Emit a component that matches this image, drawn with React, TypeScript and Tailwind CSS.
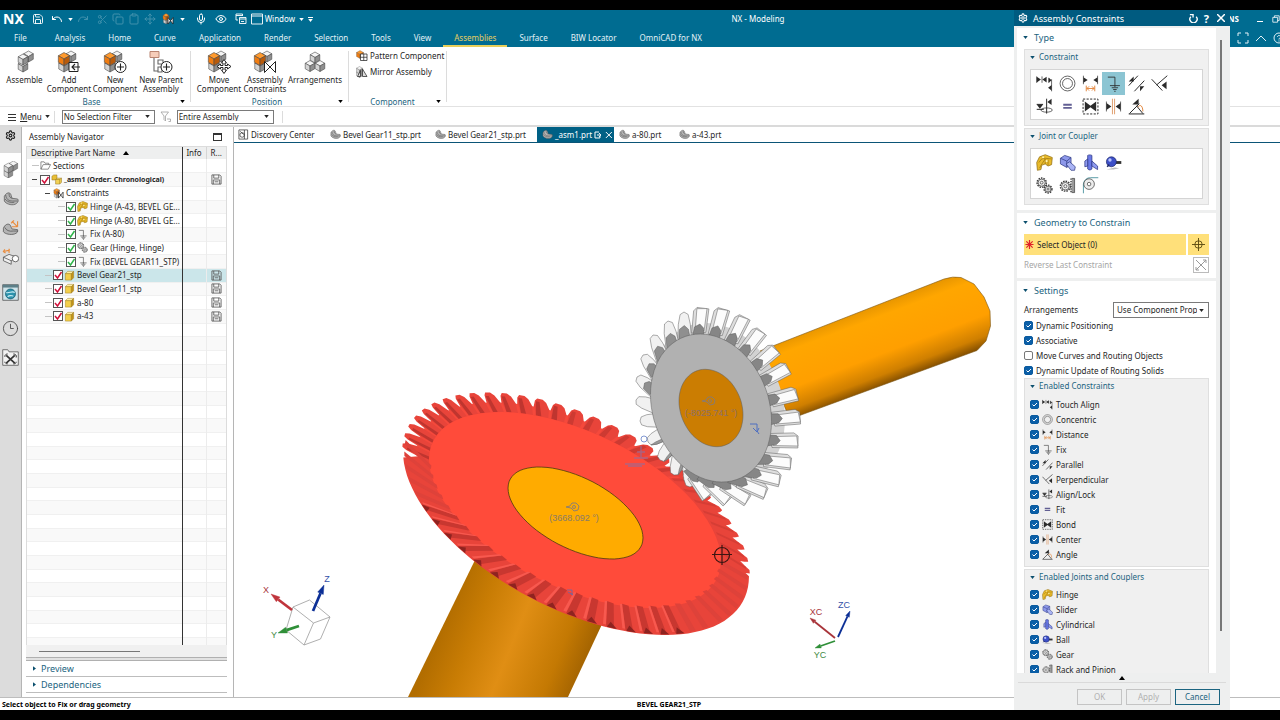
import { useState, type ReactNode } from "react";
import clsx from "clsx";
import {
  Clipboard,
  Clock3,
  Copy,
  Eye,
  Mic,
  Move,
  Redo,
  Save,
  Scissors,
  Settings,
  Undo,
} from "lucide-react";

type Point = [number, number];

/* ---------- small shared pieces ---------- */

function Caret({ className = "" }: { className?: string }) {
  return (
    <svg viewBox="0 0 6 4" className={clsx("h-[3px] w-[5px] shrink-0", className)} fill="currentColor">
      <path d="M0 0h6L3 4z" />
    </svg>
  );
}

function Divider({ className = "" }: { className?: string }) {
  return <span className={clsx("w-px shrink-0 bg-[#dcdcdc]", className)} />;
}

interface DropdownProps {
  label: string;
  options: string[];
  className?: string;
}

function Dropdown({ label, options, className = "" }: DropdownProps) {
  return (
    <span className={clsx("relative flex items-center border border-[#7a7a7a] bg-white", className)}>
      <select
        aria-label={label}
        className="mr-[11px] h-full w-full appearance-none overflow-hidden text-clip whitespace-nowrap bg-transparent pl-px leading-none outline-none"
      >
        {options.map((o) => (
          <option key={o}>{o}</option>
        ))}
      </select>
      <Caret className="pointer-events-none absolute right-1" />
    </span>
  );
}

/* ---------- brick icons ---------- */

function Cube({ x, y, r = 5, orange = false }: { x: number; y: number; r?: number; orange?: boolean }) {
  const w = r * 0.87;
  const h = r / 2;
  const [top, left, right] = orange ? ["#ff9a2e", "#f07c10", "#b85a0a"] : ["#f4f4f4", "#d4d4d4", "#8f8f8f"];
  return (
    <g stroke="#4a4a4a" strokeWidth="0.6" strokeLinejoin="round">
      <path d={`M${x} ${y - r}l${w} ${h}l${-w} ${h}l${-w} ${-h}z`} fill={top} />
      <path d={`M${x - w} ${y - h}l${w} ${h}v${r}l${-w} ${-h}z`} fill={left} />
      <path d={`M${x + w} ${y - h}l${-w} ${h}v${r}l${w} ${-h}z`} fill={right} />
    </g>
  );
}

function Bricks({ orange = false, children }: { orange?: boolean; children?: ReactNode }) {
  return (
    <svg viewBox="0 0 24 24" className="h-6 w-6">
      <Cube x={14} y={6.5} r={5.5} />
      <Cube x={7} y={16} r={6} />
      <Cube x={7} y={9} r={6.5} orange={orange} />
      {children}
    </svg>
  );
}

const line = { fill: "none", stroke: "#222", strokeWidth: 1.1 };

const ribbonIcons: Record<string, ReactNode> = {
  assemble: (
    <svg viewBox="0 0 24 24" className="h-6 w-6">
      <Cube x={15.5} y={6.500} r={5.500} />
      <Cube x={10} y={16.500} r={5.500} />
      <Cube x={10} y={9.500} r={5.500} />
    </svg>
  ),
  add: (
    <Bricks orange>
      <path d="M12 12.500h9v9h-9z" fill="#fff" stroke="#222" />
      <path d="M23 17h-8M18 14l-3 3 3 3" {...line} />
    </Bricks>
  ),
  create: (
    <Bricks orange>
      <circle cx="17.500" cy="17" r="5.500" fill="#fff" stroke="#222" />
      <path d="M17.500 13.500v7M14 17h7" {...line} />
    </Bricks>
  ),
  parent: (
    <svg viewBox="0 0 24 24" className="h-6 w-6">
      <path d="M1 1.500h9v6H1z" fill="#f6cdb9" stroke="#b98470" />
      <path d="M5 8v13h4M9 10h5v4H9zM9 17h4v5H9z" {...line} stroke="#666" />
      <circle cx="17.500" cy="17" r="5.500" fill="#fff" stroke="#222" />
      <path d="M17.500 13.500v7M14 17h7" {...line} />
    </svg>
  ),
  move: (
    <Bricks orange>
      <path d="M17 9.500l2.500 3.500h-1.500v2.500h2.500v-1.500L24 16.500l-3.500 2.500v-1.500H18v2.500h1.500L17 23.500l-2.500-3.500H16v-2.500h-2.500v1.500L10 16.500l3.500-2.500V15.500H16v-2.500h-1.500z" fill="#fff" stroke="#222" />
    </Bricks>
  ),
  constrain: (
    <Bricks orange>
      <path d="M11.500 11.500v11l11-11v11z" fill="#fff" stroke="#222" />
    </Bricks>
  ),
  arrange: (
    <svg viewBox="0 0 24 24" className="h-6 w-6">
      <Cube x={12} y={7.500} r={5.500} />
      <Cube x={7} y={16} r={5.500} />
      <Cube x={17} y={16} r={5.500} />
    </svg>
  ),
};

/* ---------- constraint and joint glyphs ---------- */

const ink = "#2b2b2b";

const glyphs: Record<string, ReactNode> = {
  touch: (
    <>
      <path d="M1 2v9M8.500 2v9M18 4v7M22 6v17" stroke={ink} fill="none" />
      <path d="M1 2.500l6 4-6 4zM15 2.500l-6 4 6 4zM18 4l4 3.500-4 3.500zM22 14l-5 4 5 4z" fill={ink} />
    </>
  ),
  concentric: (
    <g fill="none" stroke={ink}>
      <circle cx="12" cy="12" r="10.500" />
      <circle cx="12" cy="12" r="7" />
    </g>
  ),
  distance: (
    <>
      <path d="M2 1v12M22 1v12" stroke={ink} />
      <path d="M2 3l6 4-6 4zM22 3l-6 4 6 4z" fill={ink} />
      <path d="M6 15v8M18 15v8M7 19h10M10 16l-3 3 3 3M14 16l3 3-3 3" stroke="#e08033" strokeWidth="1.300" fill="none" />
    </>
  ),
  fix: <path d="M4 3h10v14M7 15h14M9.500 18h9M11.500 20.500h5M13 23h2" stroke={ink} strokeWidth="1.200" fill="none" />,
  parallel: (
    <>
      <path d="M1 15L14 1M9 23L23 8" stroke={ink} strokeWidth="1.400" />
      <path d="M1 9l7-7v7zM17 16h6l-6 7z" fill={ink} />
    </>
  ),
  perpendicular: (
    <>
      <path d="M1 6l15 16M8 14L23 1" stroke={ink} strokeWidth="1.400" fill="none" />
      <path d="M22 9v11l-7-5.500z" fill={ink} />
    </>
  ),
  align: (
    <>
      <path d="M1 9h9M1 16h10M15 1v21" stroke={ink} strokeWidth="1.400" />
      <path d="M1 9h9l-4.500 6zM22 1v9l-6-4.500z" fill={ink} />
      <ellipse cx="15" cy="17" rx="8" ry="3" fill="none" stroke={ink} />
    </>
  ),
  fit: <path d="M6 9.500h12M6 14h12" stroke="#625f93" strokeWidth="2.600" />,
  bond: (
    <>
      <path d="M1.500 1.500h21v21h-21z" fill="none" stroke={ink} strokeWidth="1.400" strokeDasharray="3 2" />
      <path d="M4 5v14l8-6v-2zM20 5v14l-8-6v-2z" fill={ink} />
    </>
  ),
  center: (
    <>
      <path d="M2 5v14M22 5v14" stroke={ink} />
      <path d="M2 7l7 5-7 5zM22 7l-7 5 7 5z" fill={ink} />
      <path d="M10.500 1v22M13.500 1v22" stroke="#e0a070" strokeWidth="1.400" />
    </>
  ),
  angle: (
    <>
      <path d="M1 22.500h22M2 22L16 8M12 11l9 11" stroke={ink} strokeWidth="1.400" fill="none" />
      <path d="M6 9l9-8v8z" fill={ink} />
      <path d="M14 13c3-5 7-2 7 6" stroke="#e08033" fill="none" strokeWidth="1.300" />
    </>
  ),
  hinge: (
    <>
      <path d="M1 12L5 4l8-3 10 4-1 10-5 2-4-3-5 2-1 6-5 1z" fill="#e9bb2c" stroke="#8d6a10" />
      <path d="M4 12l4-5 5-1 9 1M7 16l6-9M13 14V7M5 20l2-4M17 8v8" stroke="#9b7410" fill="none" />
      <circle cx="10" cy="4.500" r="1.400" fill="#fff3b0" />
      <circle cx="15" cy="10" r="1.600" fill="#fff3b0" />
    </>
  ),
  slider: (
    <>
      <path d="M2 6l6-4 9 3v9l-6 5-9-5z" fill="#8d98ea" stroke="#2b367f" />
      <path d="M2 6l9 4v9M11 10l6-5" stroke="#2b367f" fill="none" />
      <path d="M10 14l5-3 8 7-1 5h-5z" fill="#aab4f5" stroke="#2b367f" />
    </>
  ),
  cylindrical: (
    <>
      <path d="M8 2c2-1 4-1 6 0v19c-2 2-4 2-6 0z" fill="#6a79e6" stroke="#232e80" />
      <path d="M4 10l4-3v10l-4 1zM14 10l8 7v5l-8-5z" fill="#8f9bf0" stroke="#232e80" />
    </>
  ),
  ball: (
    <>
      <path d="M2 22l12-3 6 1-8 2z" fill="#bbb" />
      <path d="M14 10h9v4h-9z" fill="#333" />
      <circle cx="9" cy="11" r="7" fill="#3d50c8" stroke="#1c2667" />
      <circle cx="7" cy="8.500" r="2.400" fill="#b9c4ff" />
      <path d="M3 18l3-3" stroke="#1c2667" strokeWidth="2" />
    </>
  ),
  gear: (
    <g fill="#f2f2f2" stroke="#3b3b3b">
      <circle cx="8" cy="8" r="6.500" strokeWidth="2" strokeDasharray="2.200 1.400" />
      <circle cx="8" cy="8" r="5" />
      <circle cx="8" cy="8" r="2" />
      <circle cx="17" cy="17" r="5.500" strokeWidth="2" strokeDasharray="2.200 1.400" />
      <circle cx="17" cy="17" r="4" />
      <circle cx="17" cy="17" r="1.500" />
    </g>
  ),
  rack: (
    <g fill="#f2f2f2" stroke="#3b3b3b">
      <circle cx="9" cy="13" r="7" strokeWidth="2" strokeDasharray="2.200 1.400" />
      <circle cx="9" cy="13" r="5.300" />
      <circle cx="9" cy="13" r="2.200" />
      <path d="M18 2h4v20h-4" fill="#999" />
      <path d="M17 2v20" strokeWidth="2" strokeDasharray="2 1.500" />
    </g>
  ),
  cable: (
    <>
      <path d="M2 23V10C3 4 7 1 12 1h11" fill="none" stroke="#3f8c99" strokeWidth="1.200" />
      <circle cx="10" cy="10" r="7.500" fill="#ececec" stroke="#3b3b3b" />
      <circle cx="10" cy="10" r="2.500" fill="#fff" stroke="#3b3b3b" />
    </>
  ),
  block: (
    <g stroke="#9a7613" strokeLinejoin="round">
      <path d="M3 8l5-5h13l-5 5z" fill="#fff0a8" />
      <path d="M3 8h13v14H3z" fill="#f3cf4a" />
      <path d="M16 8l5-5v14l-5 5z" fill="#c29416" />
    </g>
  ),
  assembly: (
    <g stroke="#8c6a10" strokeLinejoin="round">
      <path d="M2 5l4-3h7v8l-4 3H2z" fill="#e8bf36" />
      <path d="M10 12l4-3h9v9l-4 4h-9z" fill="#f2d257" />
      <path d="M10 12h9v10M19 12l4-3" fill="none" />
    </g>
  ),
  constraints: (
    <>
      <Cube x={8} y={16} r={6} />
      <Cube x={8} y={8} r={7} orange />
      <path d="M12 9v13l10-13v13z" fill="#fff" stroke="#222" strokeWidth="1.600" />
    </>
  ),
  folder: <path d="M2 20V4h7l2 3h8v3M2 20L7 10h16l-5 10z" fill="#fff" stroke="#555" strokeWidth="1.400" />,
  disk: (
    <g fill="none" stroke="#555" strokeWidth="1.800">
      <path d="M2 2h17l3 3v17H2z" />
      <path d="M6 2v7h11V2M5 22v-9h14v9M8 17h8" />
    </g>
  ),
  part: (
    <g stroke="#4d4d4d" strokeLinejoin="round">
      <path d="M2 8C4 4 7 2 10 3c3 2 2 6 4 8l8 1c2 3 0 6-4 8-6 2-14-1-16-5z" fill="#b4b4b4" />
      <path d="M4 6c1 6 4 9 10 9h8M3 12c3 4 8 6 14 5M9 4c0 4 2 7 5 7" fill="none" />
    </g>
  ),
};

function Glyph({ name, className = "h-[11px] w-[11px]" }: { name: string; className?: string }) {
  return (
    <svg viewBox="0 0 24 24" className={clsx("shrink-0", className)}>
      {glyphs[name]}
    </svg>
  );
}

/* ---------- title bar and ribbon ---------- */

const menuTabs = [
  "File",
  "Analysis",
  "Home",
  "Curve",
  "Application",
  "Render",
  "Selection",
  "Tools",
  "View",
  "Assemblies",
  "Surface",
  "BIW Locator",
  "OmniCAD for NX",
];

function TitleBar() {
  const dim = "opacity-25";
  return (
    <div className="flex h-[18px] items-center text-white">
      <div className="flex w-[313px] shrink-0 items-center pl-[3px]">
        <span className="w-8 text-[14px] font-bold leading-none">NX</span>
        <button aria-label="Save"><Save size={12} strokeWidth={1.8} /></button>
        <button aria-label="Undo" className="ml-[7px]"><Undo size={12} strokeWidth={2} /></button>
        <Caret className="ml-[5px]" />
        <button aria-label="Redo" className={clsx("ml-1", dim)}><Redo size={12} strokeWidth={2} /></button>
        <button aria-label="Cut" className={clsx("ml-2", dim)}><Scissors size={11} /></button>
        <button aria-label="Copy" className={clsx("ml-1", dim)}><Copy size={12} /></button>
        <button aria-label="Paste" className={clsx("ml-1", dim)}><Clipboard size={12} /></button>
        <button aria-label="Move" className={clsx("ml-1", dim)}><Move size={12} /></button>
        <button aria-label="Assembly Constraints" className="ml-1.5"><Glyph name="constraints" className="h-3 w-3" /></button>
        <Caret className="ml-1.5" />
        <button aria-label="Voice" className="ml-2.5"><Mic size={12} /></button>
        <button aria-label="Look" className="ml-2"><Eye size={12} /></button>
        <button aria-label="Cascade" className="ml-2">
          <svg viewBox="0 0 24 24" className="h-3 w-3" fill="none" stroke="currentColor" strokeWidth="1.800">
            <path d="M6 14H2V2h13v4M2 5h13M9 9h13v12H9zM9 12h13M12 17h6" />
          </svg>
        </button>
        <button className="ml-1 flex items-center gap-0.5">
          <svg viewBox="0 0 24 24" className="h-3 w-3" fill="none" stroke="currentColor" strokeWidth="1.800">
            <path d="M1 2h22v20H1zM1 6h22" />
          </svg>
          Window
          <Caret className="ml-0.5" />
        </button>
        <span className="ml-1 flex flex-col items-center gap-px">
          <span className="h-px w-[5px] bg-white" />
          <Caret />
        </span>
      </div>
      <h1 className="flex-1 text-center">NX - Modeling</h1>
      <div className="flex w-[77px] shrink-0 items-center">
        <span className="w-10 text-right font-bold">NS</span>
        <button aria-label="Minimize" className="ml-[18px] mt-1 h-px w-[6px] shrink-0 bg-white" />
        <button aria-label="Restore" className="ml-[9px] shrink-0">
          <svg viewBox="0 0 10 10" className="h-2 w-2" fill="none" stroke="currentColor">
            <path d="M1 3h6v6H1zM3 3V1h6v6H7" />
          </svg>
        </button>
      </div>
    </div>
  );
}

function MenuTabs() {
  const [active, setActive] = useState("Assemblies");
  return (
    <nav className="flex h-[19px] items-stretch gap-px pl-[3px] text-[#e3f1f6]">
      {menuTabs.map((t) => (
        <button
          key={t}
          onClick={() => setActive(t)}
          className={clsx(
            "whitespace-nowrap border-b-2 px-[11px] pt-0.5",
            t === "File" && "mr-[5px]",
            t === active ? "border-[#e8cf5a] text-[#e6cd62]" : "border-transparent"
          )}
        >
          {t}
        </button>
      ))}
      <span className="ml-auto flex w-[43px] shrink-0 items-center gap-[6px]">
        <svg viewBox="0 0 12 12" className="h-3 w-3 shrink-0" fill="none" stroke="currentColor">
          <path d="M1 4V1h3M8 1h3v3M11 8v3H8M4 11H1V8" />
        </svg>
        <svg viewBox="0 0 12 12" className="h-3 w-3 shrink-0" fill="none" stroke="currentColor">
          <path d="M1 9l5-5 5 5" />
        </svg>
        <svg viewBox="0 0 12 12" className="h-3 w-3 shrink-0" fill="none" stroke="currentColor">
          <circle cx="6" cy="6" r="5" />
          <path d="M4.500 5c0-2 3-2 3 0 0 1-1.500 1-1.500 2.500M6 8.500v1" />
        </svg>
      </span>
    </nav>
  );
}

function RibbonButton({ icon, lines, width = "w-[46px]" }: { icon: string; lines: string[]; width?: string }) {
  return (
    <button className={clsx("flex shrink-0 flex-col items-center pt-[3px]", width)}>
      {ribbonIcons[icon]}
      <span className="mt-px leading-[9px]">
        {lines.map((l) => (
          <span key={l} className="block whitespace-nowrap">{l}</span>
        ))}
      </span>
    </button>
  );
}

function RibbonGroup({ title, className, children }: { title: string; className: string; children: ReactNode }) {
  return (
    <section className={clsx("flex shrink-0 flex-col", className)}>
      <div className="flex flex-1">{children}</div>
      <footer className="flex h-[9px] items-center pr-[5px] text-[#1b6480]">
        <span className="flex-1 text-center leading-none">{title}</span>
        <Caret className="text-black" />
      </footer>
    </section>
  );
}

function Ribbon() {
  return (
    <div className="flex h-[60px] shrink-0 border-b border-[#e2e2e2] bg-white">
      <RibbonGroup title="Base" className="w-[190px] pl-[3px]">
        <RibbonButton icon="assemble" lines={["Assemble"]} width="w-[43px]" />
        <RibbonButton icon="add" lines={["Add", "Component"]} />
        <RibbonButton icon="create" lines={["New", "Component"]} />
        <RibbonButton icon="parent" lines={["New Parent", "Assembly"]} />
      </RibbonGroup>
      <Divider className="my-1" />
      <RibbonGroup title="Position" className="w-[157px] pl-[5px]">
        <RibbonButton icon="move" lines={["Move", "Component"]} />
        <RibbonButton icon="constrain" lines={["Assembly", "Constraints"]} />
        <RibbonButton icon="arrange" lines={["Arrangements"]} width="w-[54px]" />
      </RibbonGroup>
      <Divider className="my-1" />
      <RibbonGroup title="Component" className="w-[97px]">
        <div className="flex flex-col gap-1 pl-[7px] pt-[3px]">
          <button className="flex items-center gap-0.5 whitespace-nowrap leading-none">
            <svg viewBox="0 0 24 24" className="h-3 w-3">
              <Cube x={8} y={9} r={8} orange />
              <path d="M9 8h13v13H9zM9 14.500h13M15.500 8v13" fill="#fff" stroke="#333" strokeWidth="1.600" />
            </svg>
            Pattern Component
          </button>
          <button className="flex items-center gap-0.5 whitespace-nowrap leading-none">
            <svg viewBox="0 0 24 24" className="h-3 w-3">
              <Cube x={7} y={16} r={7} />
              <Cube x={7} y={8} r={7} />
              <path d="M13 21V6l9 15zM9 21V9L3 21z" fill="#ddd" stroke="#333" strokeWidth="1.600" />
            </svg>
            Mirror Assembly
          </button>
        </div>
      </RibbonGroup>
      <Divider className="my-1" />
    </div>
  );
}

function SelectionBar() {
  return (
    <div className="flex h-[18px] shrink-0 items-center bg-white pl-2 pt-px">
      <button className="flex items-center">
        <svg viewBox="0 0 8 8" className="mr-1 h-2 w-2" stroke="#333" strokeWidth="1">
          <path d="M0 1.500h8M0 4.500h8M0 7.500h8" />
        </svg>
        <span><u>M</u>enu</span>
        <Caret className="ml-[3px]" />
      </button>
      <Divider className="ml-1 h-3" />
      <Dropdown label="Selection filter" className="ml-[7px] h-3.5 w-[93px]" options={["No Selection Filter", "Component", "Face"]} />
      <svg viewBox="0 0 24 24" className="mx-[5px] h-3 w-3" fill="none" stroke="#999" strokeWidth="1.500">
        <path d="M2 2h15l-6 8v10l-3-3v-7zM14 16h7v5h-4" />
      </svg>
      <Dropdown label="Selection scope" className="h-3.5 w-[97px]" options={["Entire Assembly", "Work Part Only"]} />
      <Divider className="ml-2 h-3" />
    </div>
  );
}

/* ---------- resource rail and navigator ---------- */

function ResourceRail() {
  return (
    <aside className="flex w-[22px] shrink-0 flex-col items-center border-r border-[#b5b5b5] bg-[#dcdcdc]">
      <button aria-label="Settings" className="flex h-[26px] items-start pt-[3px]">
        <Settings size={11} strokeWidth={2.5} color="#222" />
      </button>
      <button aria-label="Assembly Navigator" className="flex h-8 w-[21px] items-center justify-center self-start bg-white">
        <svg viewBox="0 0 24 24" className="h-[17px] w-[17px]">
          <Cube x={16} y={7} r={7} />
          <Cube x={9} y={17} r={7} />
          <Cube x={9} y={10} r={7} />
        </svg>
      </button>
      <button aria-label="Part Navigator" className="flex h-[28px] items-center">
        <Glyph name="part" className="h-4 w-4" />
      </button>
      <button aria-label="Reuse Library" className="flex h-[29px] items-center">
        <svg viewBox="0 0 24 24" className="h-[17px] w-[17px]">
          <path d="M2 13c2-5 6-7 9-5 2 2 2 5 3 6l8 1c1 3-1 5-4 6-6 2-14 0-16-3z" fill="#b4b4b4" stroke="#4d4d4d" />
          <path d="M4 12c2 4 6 6 12 5h6" fill="none" stroke="#4d4d4d" />
          <path d="M14 3l8 8M22 3v8M14 11h8M13 6l4-4" stroke="#e98b3c" fill="none" strokeWidth="1.600" />
        </svg>
      </button>
      <button aria-label="View Manager" className="flex h-[29px] items-center">
        <svg viewBox="0 0 24 24" className="h-[17px] w-[17px]">
          <path d="M2 13l8-4 11 4-8 5zM2 13v5l11 5v-5" fill="#eee" stroke="#444" />
          <path d="M2 5l9-2M4 2L2 5l3 2M10 1v6" stroke="#e98b3c" strokeWidth="1.600" fill="none" />
          <circle cx="19" cy="15" r="4.500" fill="#fff" stroke="#333" />
        </svg>
      </button>
      <button aria-label="Web Browser" className="flex h-[43px] items-center">
        <svg viewBox="0 0 24 24" className="h-[17px] w-[17px]">
          <path d="M1 1h22v22H1z" fill="#cfe4ea" stroke="#444" />
          <path d="M1 1h22v4H1z" fill="#5d7f88" />
          <circle cx="12" cy="14" r="7" fill="#2c93ad" stroke="#10566a" />
          <path d="M6 12c4 2 8-3 12 0M8 18c3-3 6-1 8-1" stroke="#c8eef5" fill="none" strokeWidth="1.500" />
        </svg>
      </button>
      <button aria-label="History" className="flex h-[29px] items-center">
        <Clock3 size={17} strokeWidth={1.2} color="#444" />
      </button>
      <button aria-label="Roles" className="flex h-[29px] items-center">
        <svg viewBox="0 0 24 24" className="h-[17px] w-[17px]">
          <path d="M1 1h7l2 3h13v19H1z" fill="#f3f3f3" stroke="#444" />
          <path d="M6 9l12 11M18 9L6 20" stroke="#333" strokeWidth="2.400" fill="none" />
          <path d="M4 11c0-3 2-4 4-4M16 7c3 0 5 2 4 5M4 18c0 2 2 3 4 3M16 21c3 0 4-1 4-3" stroke="#333" strokeWidth="1.400" fill="none" />
        </svg>
      </button>
    </aside>
  );
}

interface TreeRow {
  name: string;
  icon: string;
  depth: number;
  check?: "red" | "green";
  open?: boolean;
  saved?: boolean;
  bold?: boolean;
}

const treeRows: TreeRow[] = [
  { name: "Sections", icon: "folder", depth: 0 },
  { name: "_asm1 (Order: Chronological)", icon: "assembly", depth: 0, check: "red", open: true, saved: true, bold: true },
  { name: "Constraints", icon: "constraints", depth: 1, open: true },
  { name: "Hinge (A-43, BEVEL GE...", icon: "hinge", depth: 2, check: "green" },
  { name: "Hinge (A-80, BEVEL GE...", icon: "hinge", depth: 2, check: "green" },
  { name: "Fix (A-80)", icon: "fix", depth: 2, check: "green" },
  { name: "Gear (Hinge, Hinge)", icon: "gear", depth: 2, check: "green" },
  { name: "Fix (BEVEL GEAR11_STP)", icon: "fix", depth: 2, check: "green" },
  { name: "Bevel Gear21_stp", icon: "block", depth: 1, check: "red", saved: true },
  { name: "Bevel Gear11_stp", icon: "block", depth: 1, check: "red", saved: true },
  { name: "a-80", icon: "block", depth: 1, check: "red", saved: true },
  { name: "a-43", icon: "block", depth: 1, check: "red", saved: true },
];

const indents = ["w-[13px]", "w-[26px]", "w-[39px]"];

function TreeCheck({ name, color }: { name: string; color: "red" | "green" }) {
  return (
    <span className="relative h-[10px] w-[10px] shrink-0">
      <input
        type="checkbox"
        defaultChecked
        aria-label={name}
        className="peer absolute inset-0 h-full w-full appearance-none border border-[#555] bg-white"
      />
      <svg
        viewBox="0 0 10 10"
        className={clsx(
          "pointer-events-none absolute inset-0 hidden peer-checked:block",
          color === "red" ? "text-[#d0103a]" : "text-[#2fb54a]"
        )}
        fill="none"
        stroke="currentColor"
        strokeWidth="1.500"
      >
        <path d="M2 5l2.500 3L8.500 2" />
      </svg>
    </span>
  );
}

function TreeName({ row }: { row: TreeRow }) {
  return (
    <span className="flex h-3 items-center whitespace-nowrap leading-none">
      <span className={clsx("flex shrink-0 items-center pl-[5px]", indents[row.depth])}>
        {row.depth === 2 ? (
          <span className="ml-[26px] h-px w-[7px] bg-[#c4c4c4]" />
        ) : row.open ? (
          <span className={clsx("h-px w-[5px] bg-[#444]", row.depth === 1 && "ml-[13px]")} />
        ) : (
          <span className={clsx("h-px w-[7px] bg-[#c4c4c4]", row.depth === 1 && "ml-[13px]")} />
        )}
      </span>
      {row.check && <TreeCheck name={row.name} color={row.check} />}
      <Glyph name={row.icon} className={clsx("h-[11px] w-[11px]", row.check && "ml-px")} />
      <span className={clsx("ml-[2px]", row.bold && "text-[7px] font-bold")}>{row.name}</span>
    </span>
  );
}

function AssemblyNavigator() {
  const [selected, setSelected] = useState("Bevel Gear21_stp");
  const empty = Array.from({ length: 23 }, (_, i) => i);
  const infoCell = "border-l border-[#333] p-0";
  const lastCell = "border-l border-[#ececec] p-0";
  return (
    <section className="flex w-[212px] shrink-0 flex-col border-r border-[#b5b5b5] bg-white pl-1 pr-[6px]">
      <header className="flex h-[19px] items-center justify-between pl-[3px] pr-[5px]">
        <h2>Assembly Navigator</h2>
        <button aria-label="Undock" className="h-2 w-[9px] border border-t-2 border-[#333]" />
      </header>
      <div className="flex-1 border-x border-t border-[#dcdcdc]">
        <table className="h-full w-full table-fixed border-collapse">
          <thead>
            <tr className="h-3 bg-[#eeefef] text-left">
              <th className="p-0 pl-1 font-normal leading-none">
                <span className="flex items-center">
                  Descriptive Part Name
                  <svg viewBox="0 0 6 4" className="ml-2 h-1 w-[6px]"><path d="M3 0l3 4H0z" /></svg>
                </span>
              </th>
              <th className="w-6 border-l border-[#333] p-0 text-center font-normal leading-none">Info</th>
              <th className="w-5 border-l border-[#d5d5d5] p-0 text-center font-normal leading-none">R...</th>
            </tr>
          </thead>
          <tbody>
            {treeRows.map((row) => (
              <tr
                key={row.name}
                onClick={() => setSelected(row.name)}
                className={clsx("h-[13px] border-b border-[#f0f0f0]", row.name === selected ? "bg-[#cbe6ea]" : "odd:bg-white even:bg-[#f9f9f9]")}
              >
                <td className="overflow-hidden p-0"><TreeName row={row} /></td>
                <td className={infoCell} />
                <td className={lastCell}>
                  {row.saved && <Glyph name="disk" className="mx-auto block h-[11px] w-[11px]" />}
                </td>
              </tr>
            ))}
            {empty.map((i) => (
              <tr key={i} className="h-[13px] border-b border-[#f0f0f0] even:bg-[#f9f9f9]">
                <td className="p-0" />
                <td className={infoCell} />
                <td className={lastCell} />
              </tr>
            ))}
            <tr className="h-[7px] bg-[#f9f9f9]">
              <td className="p-0" />
              <td className={infoCell} />
              <td className={lastCell} />
            </tr>
          </tbody>
        </table>
      </div>
      <div className="flex h-3 items-center bg-[#f0f0f0] pl-[13px]">
        <span className="h-px w-[101px] bg-[#777]" />
      </div>
      <div className="h-1 border-y border-[#b0b0b0] bg-[#e2e2e2]" />
      {["Preview", "Dependencies"].map((t) => (
        <button key={t} className="flex h-4 items-center border-b border-[#bdbdbd] pl-[7px] text-[9px] leading-none text-[#1b6480]">
          <svg viewBox="0 0 4 6" className="mr-[5px] h-[5px] w-[3px]" fill="#0b4f6e"><path d="M0 0l4 3-4 3z" /></svg>
          {t}
        </button>
      ))}
      <div className="h-1" />
    </section>
  );
}

/* ---------- document tabs ---------- */

const docTabs = [
  { name: "Bevel Gear11_stp.prt", width: "w-[105px]" },
  { name: "Bevel Gear21_stp.prt", width: "w-[107px]" },
  { name: "_asm1.prt", width: "w-[77px]", active: true },
  { name: "a-80.prt", width: "w-[60px]" },
  { name: "a-43.prt", width: "w-[60px]" },
];

function DocumentTabs() {
  return (
    <div className="flex h-4 shrink-0 border-b border-[#0b5577] bg-white">
      <button className="flex w-[91px] shrink-0 items-center gap-0.5 whitespace-nowrap pl-1">
        <svg viewBox="0 0 24 24" className="h-[11px] w-[11px]" fill="none" stroke="#333" strokeWidth="1.600">
          <path d="M2 2h12v20H2zM14 2h7v20h-7" />
          <circle cx="9" cy="13" r="5" />
          <path d="M5 5l7 7" />
        </svg>
        Discovery Center
      </button>
      {docTabs.map((t) => (
        <button
          key={t.name}
          className={clsx("flex shrink-0 items-center gap-0.5 whitespace-nowrap pl-[5px]", t.width, t.active && "bg-[#006085] text-white")}
        >
          <Glyph name="part" />
          {t.name}
          {t.active && (
            <svg viewBox="0 0 20 8" className="h-2 w-5" fill="none" stroke="currentColor">
              <path d="M5 1H1v6h5V5M3 4h3M5 2l2 2-2 2M12 1l6 6M18 1l-6 6" />
            </svg>
          )}
        </button>
      ))}
    </div>
  );
}

/* ---------- 3D view ---------- */

// Projected circle: half extents plus the phase between the two axes.
interface Ring {
  cx: number;
  cy: number;
  rx: number;
  ry: number;
  phase: number;
}

const redOuter: Ring = { cx: 576, cy: 514, rx: 173, ry: 121, phase: 1.03 };
const redFace: Ring = { cx: 575, cy: 510, rx: 146, ry: 98, phase: 1.03 };
const redHub: Ring = { cx: 575.5, cy: 513, rx: 67.5, ry: 46, phase: 1.0 };
const grayBack: Ring = { cx: 718, cy: 404, rx: 67, ry: 81, phase: 1.39 };
const grayFace: Ring = { cx: 711, cy: 408, rx: 60.5, ry: 74, phase: 1.39 };
const grayHub: Ring = { cx: 711, cy: 408, rx: 32, ry: 38.7, phase: 1.39 };

function at(r: Ring, t: number): Point {
  return [r.cx + r.rx * Math.cos(t), r.cy + r.ry * Math.cos(t - r.phase)];
}

function mix(a: Point, b: Point, k: number): Point {
  return [a[0] + (b[0] - a[0]) * k, a[1] + (b[1] - a[1]) * k];
}

function pts(list: Point[]) {
  return list.map(([x, y]) => `${x.toFixed(1)},${y.toFixed(1)}`).join(" ");
}

function ringPoints(r: Ring) {
  return pts(Array.from({ length: 72 }, (_, i) => at(r, (i * Math.PI) / 36)));
}

// Point between the flat face (k = 0) and the outer rim (k = 1) of the red gear.
function band(t: number, k: number) {
  return mix(at(redFace, t), at(redOuter, t), k);
}

const redCount = 58;
const redStep = (Math.PI * 2) / redCount;

function RedToothTop({ t }: { t: number }) {
  const s = redStep;
  if (t > 5.4) {
    return <polygon points={pts([band(t, 0.1), band(t + s * 0.3, 0.9), band(t + s * 0.5, 0.9), band(t + s * 0.25, 0.1)])} fill="#d63d35" />;
  }
  return (
    <g>
      <polygon
        points={pts([band(t, 0), band(t + s * 0.3, 0.85), band(t + s * 0.5, 0.85), band(t + s * 0.35, 0)])}
        fill={t < 4.6 ? "#bf352f" : "#cd3a32"}
      />
      <polygon points={pts([band(t + s * 0.8, 0), band(t + s * 0.95, 0.5), band(t + s * 1.1, 0.5), band(t + s, 0)])} fill="#f5493c" />
    </g>
  );
}

function RedToothBottom({ t }: { t: number }) {
  const s = redStep;
  // ridges sweep further round the rim on the left
  const lean = t < 0.6 ? 0 : 0.04 + Math.max(0, t - 1.2) * 0.08;
  const soft = t < 0.8 || t > 2.5;
  return (
    <g>
      <polygon
        points={pts([band(t, -0.04), band(t + s * 0.42, -0.08), band(t + s * 0.42 + lean, 0.95), band(t + lean, 0.95)])}
        fill={soft ? "#de423a" : "#c83730"}
      />
      {!soft && (
        <>
          <polygon points={pts([band(t + s * 0.42, -0.08), band(t + s * 0.58, -0.06), band(t + s * 0.58 + lean, 0.9), band(t + s * 0.42 + lean, 0.9)])} fill="#f8594f" />
          <polygon points={pts([band(t + lean - s * 0.15, 0.98), band(t + lean + s * 0.1, 0.74), band(t + lean + s * 0.4, 0.98)])} fill="#8e2320" />
        </>
      )}
    </g>
  );
}

function RedGear() {
  const teeth = Array.from({ length: redCount }, (_, i) => i * redStep);
  const outline = teeth.flatMap((t): Point[] => {
    if (t <= 3.1) return [band(t, 1), band(t + redStep / 2, 1)];
    const root = t > 5.4 ? 0.72 : 0.42;
    return [
      band(t, root),
      band(t + redStep * 0.25, 0.88),
      band(t + redStep * 0.42, 1.03),
      band(t + redStep * 0.72, 1.03),
      band(t + redStep * 0.88, 0.88),
    ];
  });
  return (
    <g>
      <polygon points={pts(outline)} fill="#e8443a" />
      {teeth.filter((t) => t > 3.1).map((t) => <RedToothTop key={t} t={t} />)}
      <polygon points={ringPoints(redFace)} fill="#ff4b3a" />
      {teeth.filter((t) => t <= 3.1).map((t) => <RedToothBottom key={t} t={t} />)}
      <polygon points={ringPoints(redHub)} fill="#ffab00" stroke="#4a3a10" strokeWidth="0.8" />
    </g>
  );
}

const grayTips: Point[] = [
  [702, 308], [684, 312], [668, 321], [653, 335], [643, 355], [637, 377], [636, 400],
  [640, 421], [648, 442], [660, 460], [674, 475], [690, 487], [708, 497], [728, 501],
  [748, 500], [766, 493], [780, 480], [791, 463], [798, 441], [800, 417], [797, 394],
  [788, 368], [776, 349], [761, 331], [744, 317], [723, 309],
];

function GrayTooth({ tip }: { tip: Point }) {
  const angle = Math.atan2(tip[1] - 404, tip[0] - 718);
  const turned = Math.cos(angle) > -0.2 && angle > 0 ? angle + 0.18 * Math.sin(angle) : angle;
  const ux = Math.cos(turned);
  const uy = Math.sin(turned);
  // distance from the face centre to its edge in this direction
  const reach = 1 / Math.sqrt(2.826e-4 * ux * ux - 8.4e-5 * ux * uy + 1.889e-4 * uy * uy);
  const base: Point = [711 + ux * reach, 408 + uy * reach];
  const len = Math.hypot(tip[0] - base[0], tip[1] - base[1]);
  const vx = (tip[0] - base[0]) / len;
  const vy = (tip[1] - base[1]) / len;
  const side = (k: number, offset: number): Point => {
    const p = mix(base, tip, k);
    return [p[0] - vy * offset, p[1] + vx * offset];
  };

  if (Math.cos(angle) < -0.25) {
    return (
      <g>
        <polygon points={pts([side(-0.3, -7), side(0.5, -6), side(0.9, -4), side(1, 0), side(0.9, 4), side(0.5, 6), side(-0.3, 7)])} fill="#f1f1f1" />
        {vy < -0.5 && <polygon points={pts([side(-0.2, -6), side(0.3, -5), side(0.45, 0), side(0.3, 4), side(-0.2, 6)])} fill="#8f8f8f" />}
        {vy > 0.15 && <polygon points={pts([side(-0.2, -7), side(0.5, -6), side(0.9, -4), side(0.5, -3.5), side(-0.2, -4)])} fill="#999" />}
      </g>
    );
  }
  return (
    <g>
      <polygon points={pts([side(0, -7), side(0.85, -8), side(1, -5), side(1, 7), side(0.1, 7)])} fill="#dedede" />
      <polygon points={pts([side(0.2, -4), side(0.95, -5), side(1, 5), side(0.15, 5)])} fill="#fcfcfc" />
      <polygon points={pts([side(-0.2, -6), side(0.25, -5), side(0.38, 0), side(0.25, 4), side(-0.2, 6)])} fill="#868686" />
    </g>
  );
}

function GrayGear() {
  return (
    <g stroke="#5a5a5a" strokeWidth="0.5" strokeLinejoin="round">
      <polygon points={ringPoints(grayBack)} fill="#d2d2d2" stroke="none" />
      {grayTips.map((tip) => (
        <GrayTooth key={tip.join()} tip={tip} />
      ))}
      <polygon points={ringPoints(grayFace)} fill="#b1b1b1" />
      <polygon points={ringPoints(grayHub)} fill="#cb7d02" />
    </g>
  );
}

function Arrow({ from, to, color, size = 3 }: { from: Point; to: Point; color: string; size?: number }) {
  const len = Math.hypot(to[0] - from[0], to[1] - from[1]);
  const ux = (to[0] - from[0]) / len;
  const uy = (to[1] - from[1]) / len;
  const neck: Point = [to[0] - ux * size * 3, to[1] - uy * size * 3];
  return (
    <g fill={color} stroke={color}>
      <path d={`M${from[0]} ${from[1]}L${neck[0]} ${neck[1]}`} strokeWidth={size * 0.9} />
      <polygon points={pts([to, [neck[0] - uy * size, neck[1] + ux * size], [neck[0] + uy * size, neck[1] - ux * size]])} strokeWidth="0.4" />
    </g>
  );
}

function HingeMark({ x, y }: { x: number; y: number }) {
  return (
    <g fill="none" stroke="#857a78" strokeWidth="0.9">
      <path d={`M${x - 7} ${y}l4-1 2-3h4l3 3-1 4-4 1-3-3z`} />
      <circle cx={x + 1} cy={y} r="1.500" />
    </g>
  );
}

function GraphicsView() {
  return (
    <svg
      viewBox="234 143 1046 554"
      preserveAspectRatio="xMinYMin meet"
      className="min-h-0 w-full flex-1 bg-white"
      role="img"
      aria-label="Bevel gear assembly"
    >
      <defs>
        <linearGradient id="shaftA" gradientUnits="userSpaceOnUse" x1="858" y1="312" x2="886" y2="386">
          <stop offset="0" stopColor="#e89600" />
          <stop offset="0.15" stopColor="#ffa600" />
          <stop offset="0.6" stopColor="#ff9f00" />
          <stop offset="0.85" stopColor="#cf7f00" />
          <stop offset="1" stopColor="#7c4a00" />
        </linearGradient>
        <linearGradient id="shaftB" gradientUnits="userSpaceOnUse" x1="436" y1="640" x2="584" y2="700">
          <stop offset="0" stopColor="#b26d00" />
          <stop offset="0.2" stopColor="#c87c04" />
          <stop offset="0.45" stopColor="#e08e14" />
          <stop offset="0.75" stopColor="#c47903" />
          <stop offset="1" stopColor="#955a00" />
        </linearGradient>
      </defs>

      <path d="M760 351L944 279Q953 276 961 277.500L974 284 984 297 990 311 990.500 326 986 341 977 350.500 790 419z" fill="url(#shaftA)" stroke="#7a5413" strokeWidth="0.6" />
      <path d="M475 560L408 697H568L604 620z" fill="url(#shaftB)" />
      <RedGear />
      <GrayGear />

      <HingeMark x={573} y={507} />
      <HingeMark x={709} y={401} />
      <g fontFamily="Liberation Sans, Arial, sans-serif" fontSize="9" textAnchor="middle">
        <text x="574" y="521" fill="#8a7c66">(3668.092 °)</text>
        <text x="711" y="416" fill="#8c7068">(-8025.741 °)</text>
      </g>
      <g fill="none" stroke="#4f6fc0">
        <path d="M750 424h7v8M753 428l4 4 2-4M757 431l2 3" />
        <path d="M567 590h5v5M568 592l5 3" opacity="0.7" />
        <path d="M637 452h8M641 446v12M634 458h14M625 464h20M628 466h14" stroke="#8f6f9f" strokeWidth="1.400" opacity="0.7" />
        <circle cx="644" cy="439" r="3" opacity="0.7" />
      </g>

      <g fill="none" stroke="#3c1512">
        <circle cx="722" cy="555" r="7.500" strokeWidth="1.200" />
        <path d="M712 554.500h20M722 545v20" strokeWidth="1.200" />
      </g>

      <g fill="none" stroke="#9a9a9a" strokeWidth="0.8">
        <path d="M293 607L309.500 600L330 617L313.500 623zM313.500 623L304 645L320.500 639L330 617M293 607L286 630L304 645" />
      </g>
      <Arrow from={[292, 610]} to={[271, 594]} color="#c0353c" />
      <Arrow from={[313, 611]} to={[324, 585]} color="#0c2f96" />
      <Arrow from={[299, 626]} to={[278, 633]} color="#2f8f38" />
      <Arrow from={[835, 638]} to={[810, 618]} color="#a8343a" size={2} />
      <Arrow from={[838, 637]} to={[850, 611]} color="#0c2f96" size={2} />
      <Arrow from={[835, 641]} to={[815, 648]} color="#2f8f38" size={2} />
      <g fontFamily="Liberation Sans, Arial, sans-serif" fontSize="9" textAnchor="middle">
        <text x="266" y="593" fill="#a8343a">X</text>
        <text x="327" y="582" fill="#3450a8">Z</text>
        <text x="274" y="638" fill="#3f8a44">Y</text>
        <text x="816" y="615" fill="#a8343a">XC</text>
        <text x="844" y="608" fill="#3450a8">ZC</text>
        <text x="820" y="658" fill="#3f8a44">YC</text>
      </g>
    </svg>
  );
}

/* ---------- Assembly Constraints dialog ---------- */

const constraintKinds = [
  ["touch", "Touch Align"],
  ["concentric", "Concentric"],
  ["distance", "Distance"],
  ["fix", "Fix"],
  ["parallel", "Parallel"],
  ["perpendicular", "Perpendicular"],
  ["align", "Align/Lock"],
  ["fit", "Fit"],
  ["bond", "Bond"],
  ["center", "Center"],
  ["angle", "Angle"],
];

const jointKinds = [
  ["hinge", "Hinge"],
  ["slider", "Slider"],
  ["cylindrical", "Cylindrical"],
  ["ball", "Ball"],
  ["gear", "Gear"],
  ["rack", "Rack and Pinion"],
];

function SectionTitle({ children }: { children: ReactNode }) {
  return (
    <h3 className="flex h-[19px] items-center pl-[6px] text-[9px] leading-none text-[#1b6480]">
      <Caret className="mr-[6px] text-[#0b4f6e]" />
      {children}
    </h3>
  );
}

function SubPanel({ title, children }: { title: string; children: ReactNode }) {
  return (
    <div className="border border-[#dfdfdf] bg-[#f0f0f0] px-[5px]">
      <h4 className="flex h-[15px] items-center pb-px leading-none text-[#1b6480]">
        <Caret className="mr-[4px] text-[#0b4f6e]" />
        {title}
      </h4>
      {children}
    </div>
  );
}

interface PaletteProps {
  kinds: string[][];
  perRow: number;
  value: string;
  onPick: (id: string) => void;
}

function Palette({ kinds, perRow, value, onPick }: PaletteProps) {
  const rows = [kinds.slice(0, perRow), kinds.slice(perRow)];
  return (
    <div className="mb-[5px] mt-1 h-[51px] border border-[#d4d4d4] bg-white pl-0.5 pt-0.5">
      {rows.map((row, i) => (
        <div key={i} className="flex">
          {row.map(([id, label]) => (
            <button
              key={id}
              aria-label={label}
              onClick={() => onPick(id)}
              className={clsx("flex h-[23px] w-[23px] items-center justify-center", value === id && "bg-[#8cc5d3]")}
            >
              <Glyph name={id} className="h-[17px] w-[17px]" />
            </button>
          ))}
        </div>
      ))}
    </div>
  );
}

function Check({ label, icon, checked = true }: { label: string; icon?: string; checked?: boolean }) {
  return (
    <label className="flex h-[15px] items-center whitespace-nowrap leading-none">
      <span className="relative h-[9px] w-[9px] shrink-0">
        <input
          type="checkbox"
          defaultChecked={checked}
          className="peer absolute inset-0 h-full w-full appearance-none rounded-[2px] border border-[#777] bg-white checked:border-[#0a5a9e] checked:bg-[#0b5fa8]"
        />
        <svg viewBox="0 0 9 9" className="pointer-events-none absolute inset-0 hidden peer-checked:block" fill="none" stroke="#fff">
          <path d="M2.500 4.500L4 6l3-3" />
        </svg>
      </span>
      {icon && <Glyph name={icon} className="ml-[3px] h-[11px] w-[11px]" />}
      <span className="ml-[3px]">{label}</span>
    </label>
  );
}

function ConstraintsDialog() {
  const [kind, setKind] = useState("fix");
  const button = "h-4 w-[45px] border text-center leading-none";
  return (
    <div
      role="dialog"
      aria-label="Assembly Constraints"
      className="absolute inset-y-0 right-[50px] flex w-[216px] flex-col bg-[#eeefef]"
    >
      <header className="flex h-4 shrink-0 items-center bg-[#005b80] pl-1 pr-[5px] text-[9px] leading-none text-white">
        <Settings size={10} strokeWidth={2.5} />
        <h2 className="ml-[5px] flex-1">Assembly Constraints</h2>
        <button aria-label="Reset">
          <svg viewBox="0 0 10 10" className="h-[9px] w-[9px]" fill="none" stroke="currentColor" strokeWidth="1.500">
            <path d="M2 3a4 4 0 1 0 6 0M1 .5h3.500V4" />
          </svg>
        </button>
        <button className="ml-[6px] text-[11px] font-bold" aria-label="Help">?</button>
        <button className="ml-[8px]" aria-label="Close">
          <svg viewBox="0 0 8 8" className="h-2 w-2" stroke="currentColor" strokeWidth="1.500"><path d="M0 0l8 8M8 0L0 8" /></svg>
        </button>
      </header>

      <div className="flex min-h-0 flex-1 pl-[3px] pt-0.5">
        <div className="flex w-[199px] shrink-0 flex-col gap-[3px] overflow-hidden">
          <section className="bg-white pb-[5px]">
            <SectionTitle>Type</SectionTitle>
            <div className="flex flex-col gap-0.5 px-[7px] pt-0.5">
              <SubPanel title="Constraint">
                <Palette kinds={constraintKinds} perRow={6} value={kind} onPick={setKind} />
              </SubPanel>
              <SubPanel title="Joint or Coupler">
                <Palette kinds={[...jointKinds, ["cable", "Cable"]]} perRow={4} value={kind} onPick={setKind} />
              </SubPanel>
            </div>
          </section>

          <section className="bg-white pb-[5px]">
            <SectionTitle>Geometry to Constrain</SectionTitle>
            <div className="flex flex-col gap-0.5 px-[7px] pt-0.5">
              <div className="flex h-[21px] gap-0.5">
                <button className="flex flex-1 items-center bg-[#ffe07a] pl-px">
                  <svg viewBox="0 0 10 10" className="mr-[3px] h-[9px] w-[9px]" stroke="#e0202a" strokeWidth="1.300">
                    <path d="M5 0v10M.5 5h9M1.500 1.500l7 7M8.500 1.500l-7 7" />
                  </svg>
                  Select Object (0)
                </button>
                <button aria-label="Point" className="flex w-[21px] items-center justify-center bg-[#ffe07a]">
                  <svg viewBox="0 0 14 14" className="h-[13px] w-[13px]" fill="none" stroke="#5b4a10">
                    <circle cx="7" cy="7" r="4" />
                    <path d="M7 0v14M0 7h14" />
                  </svg>
                </button>
              </div>
              <div className="flex h-4 items-center justify-between text-[#a5a5a5]">
                Reverse Last Constraint
                <button disabled aria-label="Reverse Last Constraint" className="h-4 w-4 border border-[#bbb] p-px">
                  <svg viewBox="0 0 12 12" fill="none" stroke="#999"><path d="M1 1l10 10M11 1L1 11M8 1h3v3M1 8v3h3" /></svg>
                </button>
              </div>
            </div>
          </section>

          <section className="bg-white">
            <SectionTitle>Settings</SectionTitle>
            <div className="flex flex-col px-[7px] pt-0.5">
              <div className="flex h-4 items-center justify-between">
                Arrangements
                <Dropdown label="Arrangements" className="h-4 w-24 pl-0.5" options={["Use Component Properties", "Individually Positioned"]} />
              </div>
              <Check label="Dynamic Positioning" />
              <Check label="Associative" />
              <Check label="Move Curves and Routing Objects" checked={false} />
              <Check label="Dynamic Update of Routing Solids" />
              <div className="flex flex-col gap-0.5">
                <SubPanel title="Enabled Constraints">
                  <div className="pb-1 pt-[3px]">
                    {constraintKinds.map(([id, label]) => (
                      <Check key={id} label={label} icon={id} />
                    ))}
                  </div>
                </SubPanel>
                <SubPanel title="Enabled Joints and Couplers">
                  <div className="pt-0.5">
                    {jointKinds.map(([id, label]) => (
                      <Check key={id} label={label} icon={id} />
                    ))}
                  </div>
                </SubPanel>
              </div>
            </div>
          </section>
        </div>
        <div className="mb-[42px] ml-1 mt-3 w-0.5 bg-[#777]" />
      </div>

      <footer className="shrink-0 px-1">
        <div className="flex h-[10px] items-center justify-center border-b border-[#dadada]">
          <svg viewBox="0 0 6 4" className="h-1 w-[6px]"><path d="M3 0l3 4H0z" /></svg>
        </div>
        <div className="flex justify-end gap-1 pb-[5px] pr-[6px] pt-[6px]">
          <button disabled className={clsx(button, "border-[#c4c4c4] text-[#b0b0b0]")}>OK</button>
          <button disabled className={clsx(button, "border-[#c4c4c4] text-[#b0b0b0]")}>Apply</button>
          <button className={clsx(button, "border-[#1b6480] text-[#1b6480]")}>Cancel</button>
        </div>
      </footer>
    </div>
  );
}

export default function App() {
  return (
    <div className="flex h-screen flex-col bg-black py-2.5 font-['Noto_Sans',sans-serif] text-[8px] text-[#262626]">
      <div className="relative flex min-h-0 flex-1 flex-col overflow-hidden bg-white">
        <header className="shrink-0 overflow-hidden bg-[#006c91]">
          <TitleBar />
          <MenuTabs />
        </header>
        <Ribbon />
        <SelectionBar />
        <main className="flex min-h-0 flex-1 border-t-2 border-[#dadada]">
          <ResourceRail />
          <AssemblyNavigator />
          <div className="flex min-w-0 flex-1 flex-col">
            <DocumentTabs />
            <GraphicsView />
          </div>
        </main>
        <footer className="grid h-[13px] shrink-0 grid-cols-[1fr_auto_1fr] items-center border-t border-[#bdbdbd] bg-white pl-0.5 text-[7px] font-bold leading-none text-black">
          <span>Select object to Fix or drag geometry</span>
          <span className="pl-14">BEVEL GEAR21_STP</span>
        </footer>
        <ConstraintsDialog />
      </div>
    </div>
  );
}
